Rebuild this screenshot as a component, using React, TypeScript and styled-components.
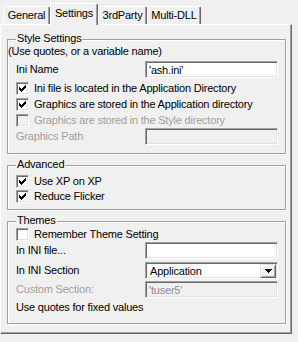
import React from "react";
import styled, { createGlobalStyle } from "styled-components";

const Global = createGlobalStyle`
  html, body { margin: 0; padding: 0; background: #f0f0f0; }
  body {
    font-family: "Liberation Sans", Arial, sans-serif;
    font-size: 11px;
    letter-spacing: -0.2px;
    color: #000;
  }
  * { box-sizing: border-box; }
`;

const Window = styled.div`
  width: 298px;
  height: 342px;
  background: #f0f0f0;
  overflow: hidden;
`;

const TabStrip = styled.div`
  display: flex;
  align-items: flex-end;
  height: 24px;
  padding-left: 3px;
  position: relative;
  z-index: 1;
`;

const Tab = styled.div<{ $w: number; $active?: boolean }>`
  width: ${(p) => p.$w}px;
  height: ${(p) => (p.$active ? 22 : 18)}px;
  margin-bottom: ${(p) => (p.$active ? -1 : 0)}px;
  padding-bottom: ${(p) => (p.$active ? 3 : 0)}px;
  background: #f0f0f0;
  border-top: 1px solid #fff;
  border-left: 1px solid #fff;
  border-right: 1px solid #696969;
  box-shadow: inset -1px 0 0 #a0a0a0;
  border-radius: 2px 2px 0 0;
  display: flex;
  align-items: center;
  justify-content: center;
  line-height: 13px;
  white-space: nowrap;
`;

const Panel = styled.div`
  width: 292px;
  height: 310px;
  border-top: 1px solid #fff;
  border-left: 1px solid #fff;
  border-right: 1px solid #696969;
  border-bottom: 1px solid #696969;
  box-shadow: inset -1px -1px 0 #a0a0a0;
  padding: 14px 0 0 6px;
  display: flex;
  flex-direction: column;
  gap: 11px;
`;

const Group = styled.div<{ $h: number; $pt: number }>`
  position: relative;
  width: 279px;
  height: ${(p) => p.$h}px;
  border: 1px solid #a0a0a0;
  box-shadow: inset 1px 1px 0 #fff, 1px 1px 0 #fff;
  padding-top: ${(p) => p.$pt}px;
  display: flex;
  flex-direction: column;
`;

const Legend = styled.div`
  position: absolute;
  top: -8px;
  left: 8px;
  padding: 0 1px;
  background: #f0f0f0;
  line-height: 13px;
  white-space: nowrap;
`;

const Row = styled.div<{ $h: number; $mt?: number; $indent?: number }>`
  display: flex;
  align-items: center;
  height: ${(p) => p.$h}px;
  margin-top: ${(p) => p.$mt ?? 0}px;
  padding-left: ${(p) => p.$indent ?? 8}px;
  padding-right: 7px;
  line-height: 13px;
  white-space: nowrap;
`;

const Label = styled.span<{ $disabled?: boolean }>`
  flex: 1;
  color: ${(p) => (p.$disabled ? "#a0a0a0" : "#000")};
`;

const Field = styled.input<{ $disabled?: boolean }>`
  width: 133px;
  height: 17px;
  margin: 0;
  padding: 0 3px;
  font: inherit;
  font-size: 11px;
  letter-spacing: -0.2px;
  outline: none;
  color: ${(p) => (p.$disabled ? "#8d8d8d" : "#000")};
  background: ${(p) => (p.$disabled ? "#f0f0f0" : "#fff")};
  border-top: 1px solid #a0a0a0;
  border-left: 1px solid #a0a0a0;
  border-right: 1px solid #fff;
  border-bottom: 1px solid #fff;
  box-shadow: inset 1px 1px 0 #696969, inset -1px -1px 0 #e3e3e3;
`;

const Combo = styled.div`
  width: 133px;
  height: 17px;
  display: flex;
  align-items: center;
  background: #fff;
  border-top: 1px solid #a0a0a0;
  border-left: 1px solid #a0a0a0;
  border-right: 1px solid #fff;
  border-bottom: 1px solid #fff;
  box-shadow: inset 1px 1px 0 #696969, inset -1px -1px 0 #e3e3e3;
  padding: 2px 1px 1px 4px;
`;

const ComboText = styled.span`
  flex: 1;
`;

const ComboButton = styled.div`
  width: 16px;
  height: 14px;
  background: #f0f0f0;
  border-top: 1px solid #e3e3e3;
  border-left: 1px solid #e3e3e3;
  border-right: 1px solid #696969;
  border-bottom: 1px solid #696969;
  box-shadow: inset 1px 1px 0 #fff, inset -1px -1px 0 #a0a0a0;
  display: flex;
  align-items: center;
  justify-content: center;
`;

const Box = styled.div<{ $disabled?: boolean }>`
  width: 13px;
  height: 13px;
  flex: none;
  margin-right: 5px;
  background: ${(p) => (p.$disabled ? "#f0f0f0" : "#fff")};
  border-top: 1px solid #a0a0a0;
  border-left: 1px solid #a0a0a0;
  border-right: 1px solid #fff;
  border-bottom: 1px solid #fff;
  box-shadow: inset 1px 1px 0 #696969, inset -1px -1px 0 #e3e3e3;
  display: flex;
  align-items: center;
  justify-content: center;
`;

const CHECK = [
  "......X",
  ".....XX",
  "X...XXX",
  "XX.XXX.",
  "XXXXX..",
  ".XXX...",
  "..X....",
];

const CheckMark = () => (
  <svg width="7" height="7" viewBox="0 0 7 7" shapeRendering="crispEdges">
    {CHECK.flatMap((r, y) =>
      r.split("").map((c, x) =>
        c === "X" ? <rect key={`${x}-${y}`} x={x} y={y} width="1" height="1" fill="#000" /> : null
      )
    )}
  </svg>
);

const Arrow = () => (
  <svg width="7" height="4" viewBox="0 0 7 4" shapeRendering="crispEdges">
    <rect x="0" y="0" width="7" height="1" fill="#000" />
    <rect x="1" y="1" width="5" height="1" fill="#000" />
    <rect x="2" y="2" width="3" height="1" fill="#000" />
    <rect x="3" y="3" width="1" height="1" fill="#000" />
  </svg>
);

const Check = ({
  label,
  checked,
  disabled,
  h = 16,
  mt,
}: {
  label: string;
  checked?: boolean;
  disabled?: boolean;
  h?: number;
  mt?: number;
}) => (
  <Row $h={h} $mt={mt}>
    <Box $disabled={disabled}>{checked && <CheckMark />}</Box>
    <Label $disabled={disabled}>{label}</Label>
  </Row>
);

export default function App() {
  return (
    <Window>
      <Global />
      <TabStrip>
        <Tab $w={47}>General</Tab>
        <Tab $w={48} $active>
          Settings
        </Tab>
        <Tab $w={49}>3rdParty</Tab>
        <Tab $w={54}>Multi-DLL</Tab>
      </TabStrip>
      <Panel>
        <Group $h={115} $pt={4}>
          <Legend>Style Settings</Legend>
          <Row $h={14} $indent={0}>
            <Label>(Use quotes, or a variable name)</Label>
          </Row>
          <Row $h={17} $mt={3}>
            <Label>Ini Name</Label>
            <Field readOnly value="'ash.ini'" />
          </Row>
          <Check label="Ini file is located in the Application Directory" checked mt={2} />
          <Check label="Graphics are stored in the Application directory" checked />
          <Check label="Graphics are stored in the Style directory" disabled />
          <Row $h={17}>
            <Label $disabled>Graphics Path</Label>
            <Field readOnly $disabled value="" />
          </Row>
        </Group>
        <Group $h={45} $pt={8}>
          <Legend>Advanced</Legend>
          <Check label="Use XP on XP" checked h={15} />
          <Check label="Reduce Flicker" checked h={15} />
        </Group>
        <Group $h={103} $pt={4}>
          <Legend>Themes</Legend>
          <Check label="Remember Theme Setting" />
          <Row $h={17}>
            <Label>In INI file...</Label>
            <Field readOnly value="" />
          </Row>
          <Row $h={17} $mt={3}>
            <Label>In INI Section</Label>
            <Combo>
              <ComboText>Application</ComboText>
              <ComboButton>
                <Arrow />
              </ComboButton>
            </Combo>
          </Row>
          <Row $h={17} $mt={2}>
            <Label $disabled>Custom Section:</Label>
            <Field readOnly $disabled value="'tuser5'" />
          </Row>
          <Row $h={14} $mt={2}>
            <Label>Use quotes for fixed values</Label>
          </Row>
        </Group>
      </Panel>
    </Window>
  );
}
